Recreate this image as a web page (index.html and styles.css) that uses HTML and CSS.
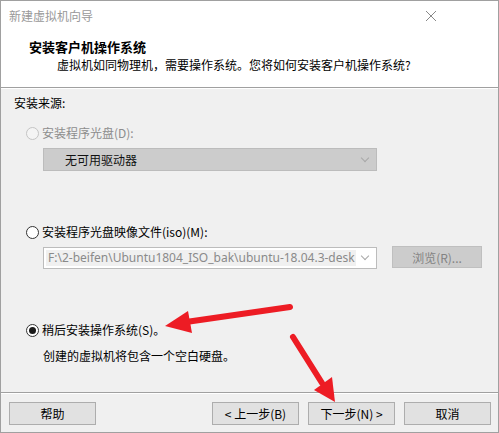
FILE: index.html
```html
<!DOCTYPE html>
<html lang="zh-CN">
<head>
  <meta charset="UTF-8" />
  <title>新建虚拟机向导</title>
  <link rel="stylesheet" href="styles.css">
</head>
<body>
  <div class="window">
    <div class="titlebar">
      <span class="title">新建虚拟机向导</span>
      <svg class="close" width="12" height="12" viewBox="0 0 12 12">
        <path d="M1 1 L11 11 M11 1 L1 11" stroke="#888" stroke-width="1" fill="none" />
      </svg>
    </div>
    <div class="header">
      <div class="header-title">安装客户机操作系统</div>
      <div class="header-sub">虚拟机如同物理机，需要操作系统。您将如何安装客户机操作系统?</div>
    </div>
    <div class="content">
      <div class="group-label">安装来源:</div>

      <div class="option disabled option-first">
        <span class="radio"></span>
        <span>安装程序光盘(D):</span>
      </div>
      <div class="field-row">
        <div class="combo combo-disabled">
          <span class="combo-text">无可用驱动器</span>
          <span class="chevron"></span>
        </div>
      </div>

      <div class="option option-iso">
        <span class="radio"></span>
        <span>安装程序光盘映像文件(iso)(M):</span>
      </div>
      <div class="field-row">
        <div class="combo combo-file">
          <span class="combo-path">F:\2-beifen\Ubuntu1804_ISO_bak\ubuntu-18.04.3-desk</span>
          <span class="chevron"></span>
        </div>
        <button class="btn btn-disabled browse">浏览(R)...</button>
      </div>

      <div class="option option-later">
        <span class="radio checked"></span>
        <span>稍后安装操作系统(S)。</span>
      </div>
      <div class="note">创建的虚拟机将包含一个空白硬盘。</div>
    </div>
    <div class="footer">
      <button class="btn">帮助</button>
      <div class="nav-buttons">
        <button class="btn">&lt; 上一步(B)</button>
        <button class="btn">下一步(N) &gt;</button>
        <button class="btn btn-cancel">取消</button>
      </div>
    </div>

    <svg class="arrows" width="499" height="433" viewBox="0 0 499 433">
      <g stroke="#ed1c24" stroke-width="6" stroke-linecap="round" fill="#ed1c24">
        <line x1="290" y1="307" x2="186" y2="322" />
        <line x1="293" y1="337" x2="322" y2="383" />
      </g>
      <polygon points="165,326 188,311 192,333" fill="#ed1c24" />
      <polygon points="335,402 314,390 332,377" fill="#ed1c24" />
    </svg>
  </div>
</body>
</html>
```

FILE: styles.css
```css
* {
  margin: 0;
  padding: 0;
  box-sizing: border-box;
}
body {
  font-family: "Noto Sans CJK SC", "Noto Sans", sans-serif;
  font-size: 12px;
  line-height: 16px;
  color: #000;
  background: #fff;
}
.window {
  position: relative;
  width: 499px;
  height: 433px;
  border: 1px solid #a0a0a0;
  display: flex;
  flex-direction: column;
  background: #f0f0f0;
}
.titlebar {
  height: 29px;
  background: #fff;
  display: flex;
  align-items: center;
  justify-content: space-between;
  padding: 0 60px 0 8px;
}
.title {
  color: #999;
}
.close {
  margin-right: 1px;
}
.header {
  height: 58px;
  background: #fff;
  padding: 9px 0 0 28px;
  border-bottom: 1px solid #a0a0a0;
}
.header-title {
  font-weight: bold;
  font-size: 13px;
}
.header-sub {
  margin-top: 2px;
  padding-left: 28px;
}
.content {
  flex: 1;
  padding: 7px 0 0 13px;
  box-shadow: inset 0 1px 0 #fff;
}
.group-label {
  height: 16px;
}
.option {
  display: flex;
  align-items: center;
  gap: 3px;
  height: 16px;
  margin-left: 12px;
}
.option-first {
  margin-top: 14px;
}
.option-iso {
  margin-top: 53px;
}
.option-later {
  margin-top: 53px;
}
.disabled {
  color: #8d8d8d;
}
.radio {
  width: 13px;
  height: 13px;
  border: 1px solid #333;
  border-radius: 50%;
  background: #fff;
  display: flex;
  align-items: center;
  justify-content: center;
}
.disabled .radio {
  border-color: #c4c4c4;
  background: #f4f4f4;
}
.radio.checked::after {
  content: "";
  width: 7px;
  height: 7px;
  border-radius: 50%;
  background: #1a1a1a;
}
.field-row {
  display: flex;
  gap: 15px;
  margin: 7px 0 0 29px;
}
.combo {
  width: 334px;
  height: 23px;
  border: 1px solid #bcbcbc;
  display: flex;
  align-items: center;
  justify-content: space-between;
  padding: 0 5px 0 4px;
}
.combo-disabled {
  background: #cccccc;
}
.combo-disabled .combo-text {
  padding-left: 17px;
  color: #111;
}
.combo-file {
  height: 22px;
  background: #fff;
  padding-left: 2px;
}
.combo-path {
  color: #8a8a8a;
  background: #f0f0f0;
  padding: 0 2px;
  white-space: nowrap;
  overflow: hidden;
  width: 310px;
  font-family: "Noto Sans", "Noto Sans CJK SC", sans-serif;
  font-size: 12px;
}
.chevron {
  width: 6px;
  height: 6px;
  border-right: 1px solid #a8a8a8;
  border-bottom: 1px solid #a8a8a8;
  transform: rotate(45deg);
  margin: -4px 3px 0 0;
}
.note {
  margin: 10px 0 0 29px;
}
.btn {
  font-family: inherit;
  font-size: 12px;
  width: 87px;
  height: 23px;
  background: #e1e1e1;
  border: 1px solid #adadad;
  color: #000;
}
.btn-disabled {
  background: #cccccc;
  border-color: #bfbfbf;
  color: #838383;
  width: 90px;
  height: 22px;
  margin-top: -1px;
}
.footer {
  height: 40px;
  border-top: 1px solid #a0a0a0;
  box-shadow: inset 0 1px 0 #fff;
  display: flex;
  justify-content: space-between;
  padding: 9px 7px 0 8px;
}
.nav-buttons {
  display: flex;
  gap: 9px;
}
.btn-cancel {
  margin-left: 0;
}
.arrows {
  position: absolute;
  left: -1px;
  top: -1px;
  pointer-events: none;
}
```
